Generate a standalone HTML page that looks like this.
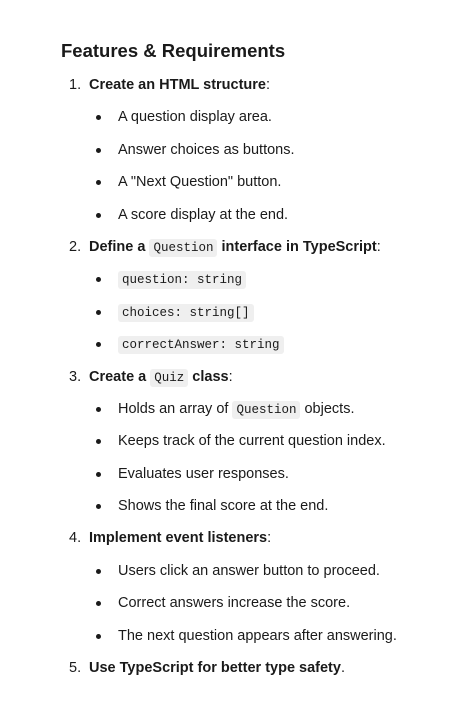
<!DOCTYPE html>
<html><head><meta charset="utf-8"><style>
body{margin:0;background:#fff;color:#1a1a1a;font-family:"Liberation Sans",sans-serif;font-size:14.5px;width:472px;height:723px;position:relative;overflow:hidden}
h2{position:absolute;left:61px;top:40px;margin:0;font-size:18.5px;font-weight:bold;line-height:22px}
#list{position:absolute;left:0;top:69px;width:472px}
.r{height:32.4px;line-height:32.4px;position:relative;white-space:nowrap}
.n{padding-left:89px}
.n span.num{position:absolute;left:69px}
.b{padding-left:118px}
.b:before{content:"";position:absolute;left:96px;top:14px;width:5px;height:5px;border-radius:50%;background:#1a1a1a}
b{font-weight:bold}
code{font-family:"Liberation Mono",monospace;font-size:12.5px;font-weight:normal;background:#efefef;padding:2px 4px;border-radius:3px}
</style></head><body>
<h2>Features &amp; Requirements</h2>
<div id="list">
<div class="r n"><span class="num">1.</span><b>Create an HTML structure</b>:</div>
<div class="r b">A question display area.</div>
<div class="r b">Answer choices as buttons.</div>
<div class="r b">A "Next Question" button.</div>
<div class="r b">A score display at the end.</div>
<div class="r n"><span class="num">2.</span><b>Define a <code>Question</code> interface in TypeScript</b>:</div>
<div class="r b"><code>question: string</code></div>
<div class="r b"><code>choices: string[]</code></div>
<div class="r b"><code>correctAnswer: string</code></div>
<div class="r n"><span class="num">3.</span><b>Create a <code>Quiz</code> class</b>:</div>
<div class="r b">Holds an array of <code>Question</code> objects.</div>
<div class="r b">Keeps track of the current question index.</div>
<div class="r b">Evaluates user responses.</div>
<div class="r b">Shows the final score at the end.</div>
<div class="r n"><span class="num">4.</span><b>Implement event listeners</b>:</div>
<div class="r b">Users click an answer button to proceed.</div>
<div class="r b">Correct answers increase the score.</div>
<div class="r b">The next question appears after answering.</div>
<div class="r n"><span class="num">5.</span><b>Use TypeScript for better type safety</b>.</div>
</div>
</body></html>
